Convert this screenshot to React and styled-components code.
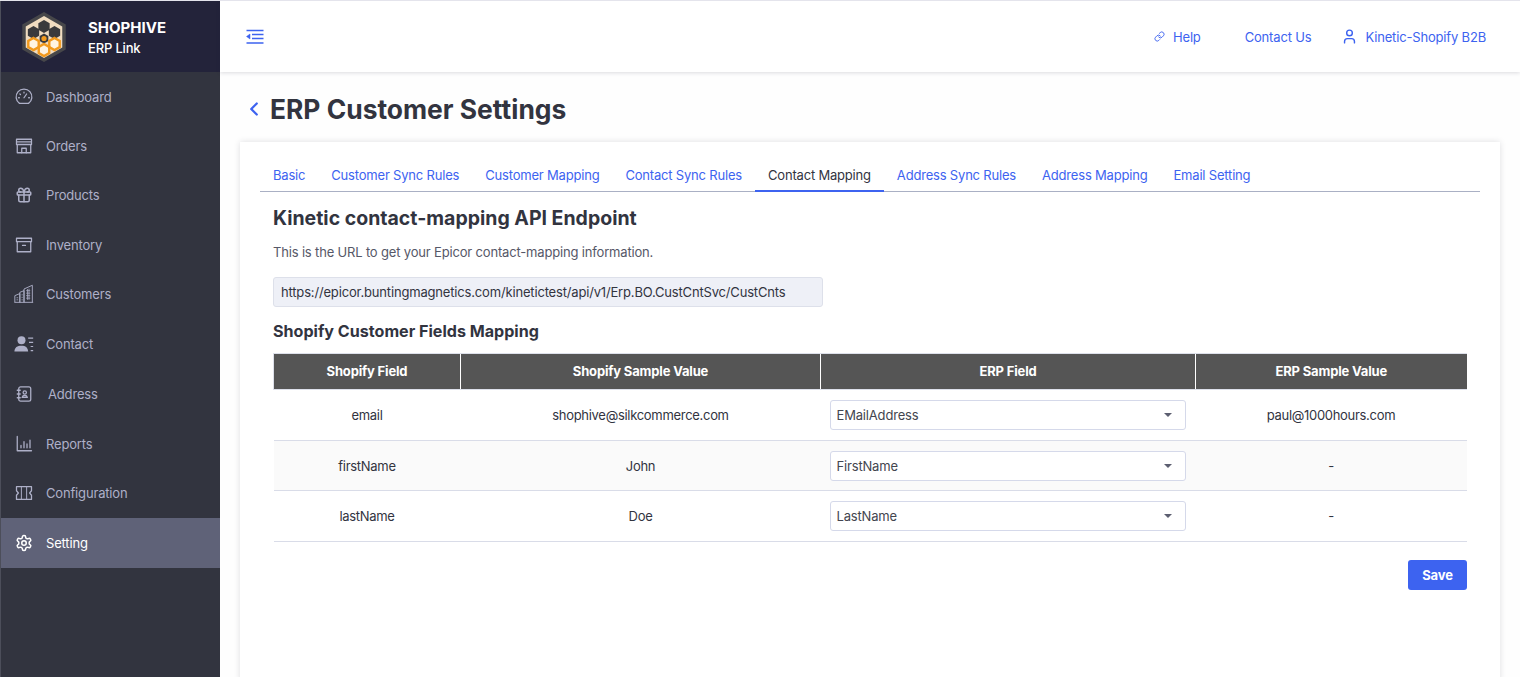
import React from 'react'
import styled, { createGlobalStyle } from 'styled-components'
import { LuGift, LuLink, LuUser, LuChevronLeft, LuSettings } from 'react-icons/lu'

const GlobalStyle = createGlobalStyle`
  html, body { margin: 0; padding: 0; height: 100%; overflow: hidden; }
  body {
    font-family: Inter, "Liberation Sans", sans-serif;
    font-size: 13px;
    letter-spacing: -0.17px;
    background: #fff;
    color: #32343f;
  }
  * { box-sizing: border-box; }
`

const Page = styled.div`
  display: flex;
  width: 1520px;
  height: 677px;
  border-top: 1px solid #e4e4ec;
  overflow: hidden;
`

const Sidebar = styled.aside`
  width: 220px;
  flex: none;
  background: #32343f;
  border-left: 1px solid #4c4e5a;
`

const Brand = styled.div`
  height: 71px;
  background: #23233a;
  display: flex;
  align-items: center;
  padding-left: 19px;
  gap: 20px;
`

const BrandText = styled.div`
  color: #fff;
  display: flex;
  flex-direction: column;
  gap: 3px;
  padding-top: 2px;
`

const BrandName = styled.div`
  font-size: 15px;
  font-weight: 700;
  line-height: 18px;
  letter-spacing: 0;
`

const BrandSub = styled.div`
  font-size: 13px;
  font-weight: 500;
  line-height: 16px;
`

const Nav = styled.nav`
  display: flex;
  flex-direction: column;
`

const NavItem = styled.div`
  height: ${p => p.$h || 49.4}px;
  display: flex;
  align-items: center;
  padding-left: 13px;
  color: ${p => (p.$active ? '#fff' : '#aeb0c8')};
  background: ${p => (p.$active ? '#5f6278' : 'transparent')};
  font-size: 13px;
`

const NavIcon = styled.span`
  width: 20px;
  height: 20px;
  display: flex;
  align-items: center;
  justify-content: center;
  margin-right: ${p => p.$gap || 12}px;
  svg { width: 18px; height: 18px; }
`

const Main = styled.main`
  flex: 1;
  min-width: 0;
  display: flex;
  flex-direction: column;
`

const Topbar = styled.header`
  position: relative;
  z-index: 1;
  height: 71px;
  flex: none;
  background: #fff;
  box-shadow: 0 1px 4px rgba(40, 40, 60, 0.16);
  display: flex;
  align-items: center;
  justify-content: space-between;
  padding: 0 34px 0 26px;
  color: #3d63f0;
`

const TopLinks = styled.div`
  display: flex;
  align-items: center;
`

const TopLink = styled.a`
  display: flex;
  align-items: center;
  font-size: 13px;
  color: #3d63f0;
  margin-left: ${p => p.$ml || 0}px;
  svg { margin-right: ${p => p.$iconGap || 8}px; }
`

const Content = styled.div`
  flex: 1;
  padding: 0 20px;
  background: #fefefe;
`

const TitleRow = styled.div`
  height: 70px;
  display: flex;
  align-items: center;
  padding-left: 3px;
  padding-top: 3px;
  color: #3d63f0;
`

const Title = styled.h1`
  margin: 0 0 0 5px;
  font-size: 26.4px;
  font-weight: 700;
  letter-spacing: 0;
  color: #32343f;
`

const Card = styled.section`
  background: #fff;
  box-shadow: 0 0 6px rgba(40, 40, 60, 0.15);
  height: 540px;
  padding: 14px 20px 0;
`

const Tabs = styled.div`
  display: flex;
  height: 36px;
  border-bottom: 1px solid #aab0c4;
`

const Tab = styled.div`
  display: flex;
  align-items: center;
  height: 36px;
  padding: 3px 13px 0;
  font-size: 13px;
  letter-spacing: -0.19px;
  color: ${p => (p.$active ? '#32343f' : '#3d63f0')};
  border-bottom: 2px solid ${p => (p.$active ? '#3d63f0' : 'transparent')};
`

const Intro = styled.div`
  padding-left: 13px;
`

const Heading = styled.h2`
  margin: 14px 0 0;
  font-size: 19.500px;
  line-height: 24px;
  font-weight: 700;
  letter-spacing: 0;
  color: #32343f;
`

const Hint = styled.p`
  margin: 12px 0 0;
  font-size: 13px;
  line-height: 20px;
  color: #565868;
`

const UrlBox = styled.div`
  margin-top: 15px;
  width: 550px;
  height: 30px;
  background: #eef0f7;
  border: 1px solid #dde0ea;
  border-radius: 3px;
  display: flex;
  align-items: center;
  padding-left: 7px;
  font-size: 13px;
  color: #32343f;
`

const SubHeading = styled.h3`
  margin: 13px 0 0;
  font-size: 16.100px;
  line-height: 22px;
  font-weight: 700;
  letter-spacing: 0;
  color: #32343f;
`

const Table = styled.table`
  margin: 11px 13px 0;
  width: 1193px;
  border-collapse: collapse;
  table-layout: fixed;
  font-size: 13px;
`

const Th = styled.th`
  background: #555;
  color: #fff;
  font-size: 13px;
  font-weight: 700;
  height: 36px;
  padding: 0 0 2px;
  text-align: center;
  border-top: 1px solid #dde0ea;
  border-bottom: 1px solid #dde0ea;
  border-left: 1px solid #fff;
  &:first-child { border-left: 1px solid #dde0ea; }
`

const Tr = styled.tr`
  background: ${p => (p.$alt ? '#fafafa' : '#fff')};
  border-bottom: 1px solid #d9dce8;
`

const Td = styled.td`
  height: ${p => p.$h || 50}px;
  text-align: center;
  color: #32343f;
  letter-spacing: -0.3px;
  padding: 0;
`

const SelectBox = styled.div`
  margin: 0 10px 0 9px;
  height: 30px;
  background: #fff;
  border: 1px solid #d5d9ea;
  border-radius: 3px;
  display: flex;
  align-items: center;
  justify-content: space-between;
  padding: 0 13px 0 6px;
  color: #43454f;
  font-size: 13px;
  letter-spacing: -0.17px;
`

const Caret = styled.span`
  width: 0;
  height: 0;
  border-left: 4px solid transparent;
  border-right: 4px solid transparent;
  border-top: 4px solid #5c5e70;
`

const Footer = styled.div`
  display: flex;
  justify-content: flex-end;
  margin-top: 18px;
  padding-right: 13px;
`

const SaveButton = styled.button`
  width: 59px;
  height: 30px;
  background: #3d63f0;
  color: #fff;
  border: none;
  border-radius: 3px;
  font-family: inherit;
  font-size: 13px;
  font-weight: 700;
  letter-spacing: -0.17px;
`

const Stroke = ({ children }) => (
  <svg viewBox="0 0 24 24" fill="none" stroke="currentColor" strokeWidth="1.7" strokeLinecap="round" strokeLinejoin="round">
    {children}
  </svg>
)

const GaugeIcon = () => (
  <Stroke>
    <path d="M6 20.500a10.500 10.500 0 1 1 12 0z" />
    <path d="M12 13l3.500-5M12 5.500v1M6.500 8l.8.700M4.800 13h1M18.200 13h1" />
  </Stroke>
)

const StoreIcon = () => (
  <Stroke>
    <path d="M2 3h20v7H2zM2 6.500h20M3 10v11h18V10" />
    <path d="M9 21v-6h6v6" />
  </Stroke>
)

const BoxIcon = () => (
  <Stroke>
    <path d="M2 3h20v4.500H2zM3 7.500V21h18V7.500M10 12.500h4" />
  </Stroke>
)

const BuildingIcon = () => (
  <svg viewBox="0 0 24 24" fill="none" stroke="currentColor" strokeWidth="1.1" style={{ width: 22, height: 22 }}>
    <path d="M1 22v-8l6-2.500V22M7 22V10l5-2v14M12 22V6l10-4.500V22M0.500 22h22.500" />
    <path d="M14.500 8h5M14.500 11h5M14.500 14h5M14.500 17h5M16.200 6v13M18 5.500V19M3 16.500h2M3 19h2M9 13h1.500M9 16h1.500M9 19h1.500" strokeWidth="0.9" />
  </svg>
)

const ContactIcon = () => (
  <svg viewBox="0 0 24 24" style={{ width: 22, height: 22 }}>
    <circle cx="9" cy="7.500" r="4.800" fill="currentColor" />
    <path d="M0.500 21c0-5 3.500-7 8.500-7s7.500 2 8 7z" fill="currentColor" />
    <path d="M17 5h6M18 10h5M20 15h3M20 20h3" stroke="currentColor" strokeWidth="1.400" />
  </svg>
)

const AddressIcon = () => (
  <Stroke>
    <rect x="5" y="2.500" width="16" height="19" rx="2.500" />
    <path d="M3 7h4M3 12h4M3 17h4" />
    <circle cx="13" cy="10" r="2.200" />
    <path d="M9.500 16.500c.5-2 2-2.500 3.500-2.500s3 .5 3.500 2.500z" />
  </Stroke>
)

const ReportIcon = () => (
  <Stroke>
    <path d="M3 2v19h19M8 17v-3M12 17V9M16 17v-5M20 17V7" />
  </Stroke>
)

const TicketIcon = () => (
  <Stroke>
    <path d="M2 3.500h20v5.500l-2.500 3 2.500 3v5.500H2V15l2.500-3L2 9z" />
    <path d="M15.500 3.500v17M8.500 3.500v17" strokeWidth="1.300" />
  </Stroke>
)

const MenuFoldIcon = () => (
  <svg width="18" height="16" viewBox="0 0 18 16" fill="none" stroke="#3d63f0" strokeWidth="1.300">
    <path d="M0.500 1.500h17M6 5.500h11.500M6 9.500h11.500M0.500 14h17" />
    <path d="M4 5v5L0.500 7.500z" fill="#3d63f0" strokeWidth="0.500" />
  </svg>
)

const hexPoints = (x, y, r) =>
  `${x},${y - r} ${x + r * 0.87},${y - r / 2} ${x + r * 0.87},${y + r / 2} ${x},${y + r} ${x - r * 0.87},${y + r / 2} ${x - r * 0.87},${y - r / 2}`

const HiveLogo = () => (
  <svg width="48" height="52" viewBox="0 0 48 52">
    <polygon points={hexPoints(24, 26, 25)} fill="#47474a" />
    <polygon points={hexPoints(24, 26, 21)} fill="#f0dcc0" />
    {[[24, 15.500, 6.500], [13.500, 21.500, 6.500], [34.500, 21.500, 6.500], [24, 27.500, 5]].map(([x, y, r]) => (
      <polygon key={`${x}-${y}`} points={hexPoints(x, y, r)} fill="#3a3a3c" />
    ))}
    <circle cx="24" cy="27.500" r="2.600" fill="#f29a1e" />
    {[[13.500, 33, 6], [34.500, 33, 6], [24, 39, 6]].map(([x, y, r]) => (
      <polygon key={`${x}-${y}`} points={hexPoints(x, y, r)} fill="#fff4e2" stroke="#f29a1e" strokeWidth="2.400" />
    ))}
  </svg>
)

const navItems = [
  { label: 'Dashboard', icon: <GaugeIcon /> },
  { label: 'Orders', icon: <StoreIcon /> },
  { label: 'Products', icon: <LuGift /> },
  { label: 'Inventory', icon: <BoxIcon /> },
  { label: 'Customers', icon: <BuildingIcon /> },
  { label: 'Contact', icon: <ContactIcon /> },
  { label: 'Address', icon: <AddressIcon />, gap: 14, h: 51 },
  { label: 'Reports', icon: <ReportIcon /> },
  { label: 'Configuration', icon: <TicketIcon /> },
  { label: 'Setting', icon: <LuSettings />, active: true },
]

const tabs = [
  'Basic', 'Customer Sync Rules', 'Customer Mapping', 'Contact Sync Rules',
  'Contact Mapping', 'Address Sync Rules', 'Address Mapping', 'Email Setting',
]

const columns = [187, 360, 375, 271]

const rows = [
  { field: 'email', sample: 'shophive@silkcommerce.com', erp: 'EMailAddress', erpSample: 'paul@1000hours.com', h: 51 },
  { field: 'firstName', sample: 'John', erp: 'FirstName', erpSample: '-', h: 50 },
  { field: 'lastName', sample: 'Doe', erp: 'LastName', erpSample: '-', h: 51 },
]

export default function App() {
  return (
    <>
      <GlobalStyle />
      <Page>
        <Sidebar>
          <Brand>
            <HiveLogo />
            <BrandText>
              <BrandName>SHOPHIVE</BrandName>
              <BrandSub>ERP Link</BrandSub>
            </BrandText>
          </Brand>
          <Nav>
            {navItems.map(item => (
              <NavItem key={item.label} $active={item.active} $h={item.h}>
                <NavIcon $gap={item.gap}>{item.icon}</NavIcon>
                {item.label}
              </NavItem>
            ))}
          </Nav>
        </Sidebar>
        <Main>
          <Topbar>
            <MenuFoldIcon />
            <TopLinks>
              <TopLink $iconGap={8}><LuLink size={11} />Help</TopLink>
              <TopLink $ml={44}>Contact Us</TopLink>
              <TopLink $ml={30} $iconGap={7}><LuUser size={17} />Kinetic-Shopify B2B</TopLink>
            </TopLinks>
          </Topbar>
          <Content>
            <TitleRow>
              <LuChevronLeft size={22} strokeWidth={2.5} />
              <Title>ERP Customer Settings</Title>
            </TitleRow>
            <Card>
              <Tabs>
                {tabs.map(t => (
                  <Tab key={t} $active={t === 'Contact Mapping'}>{t}</Tab>
                ))}
              </Tabs>
              <Intro>
                <Heading>Kinetic contact-mapping API Endpoint</Heading>
                <Hint>This is the URL to get your Epicor contact-mapping information.</Hint>
                <UrlBox>https://epicor.buntingmagnetics.com/kinetictest/api/v1/Erp.BO.CustCntSvc/CustCnts</UrlBox>
                <SubHeading>Shopify Customer Fields Mapping</SubHeading>
              </Intro>
              <Table>
                <colgroup>
                  {columns.map(w => (
                    <col key={w} width={w} />
                  ))}
                </colgroup>
                <thead>
                  <tr>
                    <Th>Shopify Field</Th>
                    <Th>Shopify Sample Value</Th>
                    <Th>ERP Field</Th>
                    <Th>ERP Sample Value</Th>
                  </tr>
                </thead>
                <tbody>
                  {rows.map((r, i) => (
                    <Tr key={r.field} $alt={i === 1}>
                      <Td $h={r.h}>{r.field}</Td>
                      <Td>{r.sample}</Td>
                      <Td>
                        <SelectBox>
                          {r.erp}
                          <Caret />
                        </SelectBox>
                      </Td>
                      <Td>{r.erpSample}</Td>
                    </Tr>
                  ))}
                </tbody>
              </Table>
              <Footer>
                <SaveButton>Save</SaveButton>
              </Footer>
            </Card>
          </Content>
        </Main>
      </Page>
    </>
  )
}
